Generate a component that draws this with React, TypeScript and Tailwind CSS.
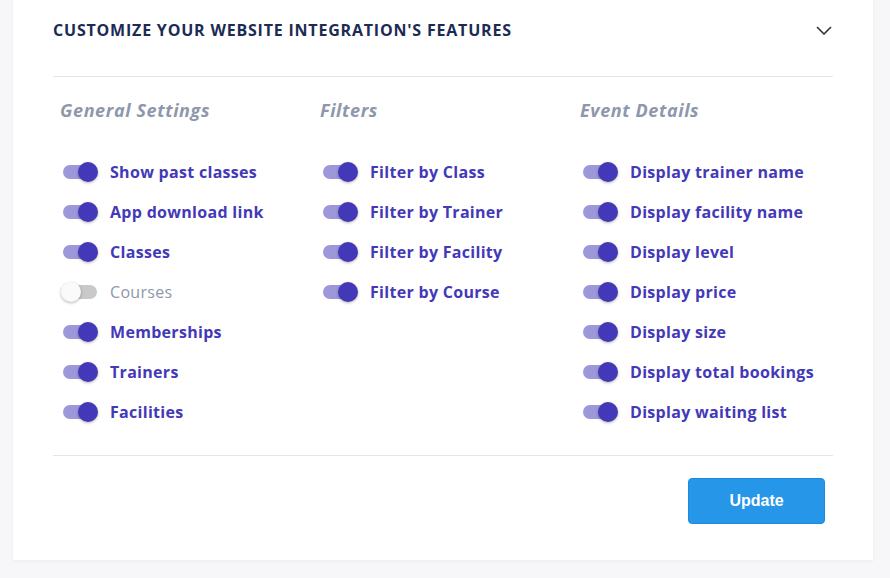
import { useState } from "react"

type Item = { label: string; on: boolean }

const columns: { title: string; items: Item[] }[] = [
  {
    title: "General Settings",
    items: [
      { label: "Show past classes", on: true },
      { label: "App download link", on: true },
      { label: "Classes", on: true },
      { label: "Courses", on: false },
      { label: "Memberships", on: true },
      { label: "Trainers", on: true },
      { label: "Facilities", on: true },
    ],
  },
  {
    title: "Filters",
    items: [
      { label: "Filter by Class", on: true },
      { label: "Filter by Trainer", on: true },
      { label: "Filter by Facility", on: true },
      { label: "Filter by Course", on: true },
    ],
  },
  {
    title: "Event Details",
    items: [
      { label: "Display trainer name", on: true },
      { label: "Display facility name", on: true },
      { label: "Display level", on: true },
      { label: "Display price", on: true },
      { label: "Display size", on: true },
      { label: "Display total bookings", on: true },
      { label: "Display waiting list", on: true },
    ],
  },
]

const Toggle: React.FC<{ on: boolean; onClick: () => void }> = ({ on, onClick }) => (
  <button type="button" onClick={onClick} className="relative h-5 w-[38px] shrink-0">
    <span className={`absolute left-[3px] top-[3px] h-[14px] w-[34px] rounded-full ${on ? "bg-[#9d98da]" : "bg-[#c9c9c9]"}`} />
    <span
      className={`absolute top-0 h-5 w-5 rounded-full shadow-[0_1px_3px_rgba(0,0,0,0.3)] ${
        on ? "left-[18px] bg-[#4339b8]" : "left-[1px] bg-[#fafafa]"
      }`}
    />
  </button>
)

const App: React.FC = () => {
  const [state, setState] = useState(columns.map((c) => c.items.map((i) => i.on)))

  const flip = (ci: number, ii: number) =>
    setState((s) => s.map((col, a) => col.map((v, b) => (a === ci && b === ii ? !v : v))))

  return (
    <div className="h-[578px] bg-[#f7f7f9] pl-[13px]" style={{ fontFamily: "'Open Sans', sans-serif" }}>
      <div className="w-[860px] bg-white px-10 pb-9 shadow-[0_1px_4px_rgba(0,0,0,0.05)]">
        <div className="h-[77px] border-b border-[#e4e4e9]">
          <div className="flex h-[60px] items-center justify-between">
            <h2 className="text-base font-bold tracking-[0.8px] text-[#1c2b54]">
              CUSTOMIZE YOUR WEBSITE INTEGRATION'S FEATURES
            </h2>
            <svg width="16" height="9" viewBox="0 0 16 9" fill="none" className="mr-px">
              <path d="M1 1l7 7 7-7" stroke="#333" strokeWidth="1.6" />
            </svg>
          </div>
        </div>

        <div className="flex border-b border-[#e4e4e9] px-[7px] pb-[23px] pt-[21px]">
          {columns.map((col, ci) => (
            <div key={col.title} className={ci < 2 ? "w-[260px] shrink-0" : "flex-1"}>
              <h3 className="h-6 text-lg font-bold italic leading-6 tracking-[0.6px] text-[#8e97ab]">{col.title}</h3>
              <div className="mt-[30px]">
                {col.items.map((item, ii) => {
                  const on = state[ci][ii]
                  return (
                    <div key={item.label} className="flex h-10 items-center gap-[12px]">
                      <Toggle on={on} onClick={() => flip(ci, ii)} />
                      <span
                        className={`text-base tracking-[0.3px] ${on ? "font-bold text-[#4339b8]" : "text-[#8e97ab]"}`}
                      >
                        {item.label}
                      </span>
                    </div>
                  )
                })}
              </div>
            </div>
          ))}
        </div>

        <div className="mt-[22px] flex justify-end pr-2">
          <button
            type="button"
            className="h-[46px] w-[137px] rounded border border-[#1d8ae0] bg-[#2696e8] text-base font-bold text-white"
            style={{ fontFamily: "'Liberation Sans', Arial, sans-serif" }}
          >
            Update
          </button>
        </div>
      </div>
    </div>
  )
}

export default App
